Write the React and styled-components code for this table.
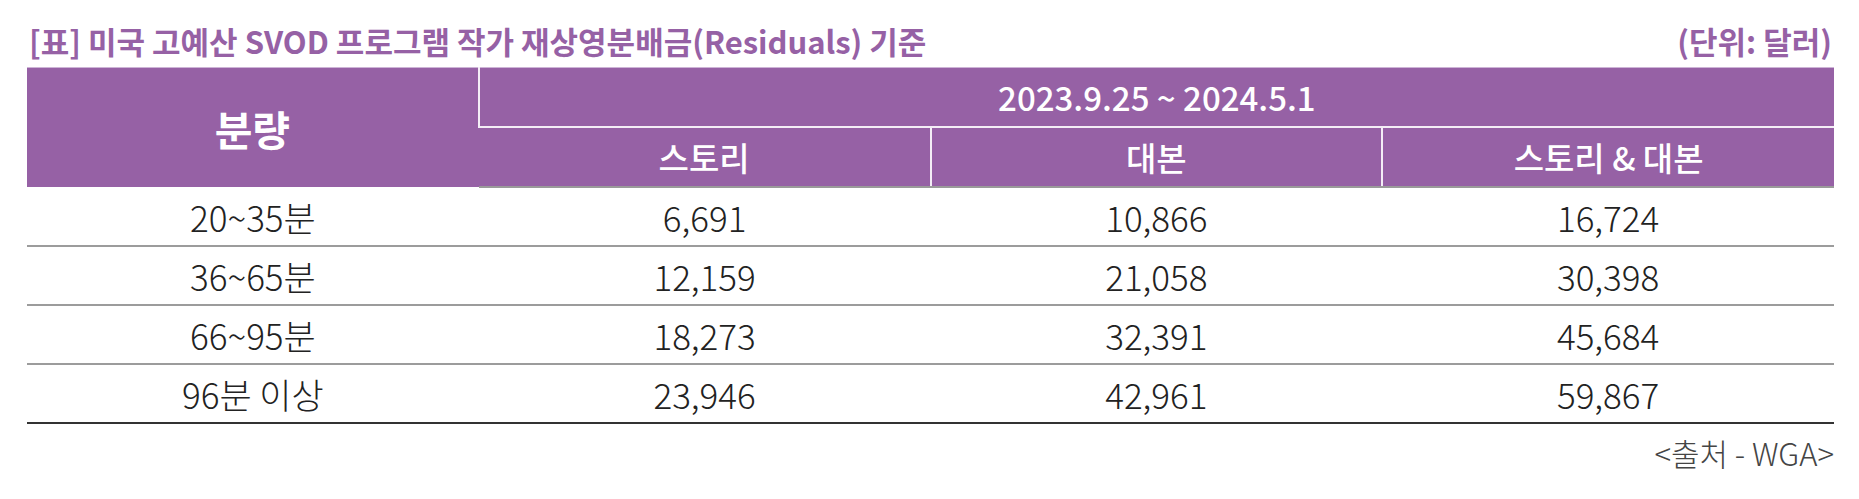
import React from "react";
import styled, { createGlobalStyle } from "styled-components";

const Global = createGlobalStyle`
  html, body { margin: 0; padding: 0; background: #ffffff; }
  body { font-family: "Noto Sans CJK KR", "Noto Sans", sans-serif; }
`;

const Page = styled.div`
  padding: 14px 25px 0 27px;
  width: 1859px;
  box-sizing: border-box;
`;

const TitleRow = styled.div`
  display: flex;
  justify-content: space-between;
  align-items: center;
  height: 53px;
  padding: 0 2px 0 2px;
  color: #9661a5;
  font-size: 31px;
  font-weight: 700;
`;

const Table = styled.table`
  width: 100%;
  border-collapse: collapse;
  table-layout: fixed;
  border-top: 1px solid #cdb4d6;
`;

const HeadCell = styled.th`
  background: #9661a5;
  color: #ffffff;
  height: 58px;
  padding: 0;
  font-weight: ${(p) => (p.$big ? 700 : 500)};
  font-size: ${(p) => (p.$big ? "41px" : "33px")};
  text-align: center;
  border-left: 2px solid #f4eef6;
  border-top: ${(p) => (p.$sub ? "2px solid #f4eef6" : "none")};
  &:first-child { border-left: none; }
`;

const HeadRow = styled.tr`
  &:last-child th { border-bottom: 2px solid #9a9a9a; }
`;

const Row = styled.tr`
  border-bottom: 2px solid #9c9c9c;
  &:last-child { border-bottom: 2px solid #333333; }
`;

const Cell = styled.td`
  height: 57px;
  padding: 0;
  text-align: center;
  font-size: 35px;
  font-weight: 300;
  color: #222222;
`;

const Source = styled.div`
  text-align: right;
  padding-top: 6px;
  font-size: 31px;
  font-weight: 300;
  color: #454545;
`;

const rows = [
  ["20~35분", "6,691", "10,866", "16,724"],
  ["36~65분", "12,159", "21,058", "30,398"],
  ["66~95분", "18,273", "32,391", "45,684"],
  ["96분 이상", "23,946", "42,961", "59,867"],
];

export default function App() {
  return (
    <>
      <Global />
      <Page>
        <TitleRow>
          <span>[표] 미국 고예산 SVOD 프로그램 작가 재상영분배금(Residuals) 기준</span>
          <span>(단위: 달러)</span>
        </TitleRow>
        <Table>
          <thead>
            <HeadRow>
              <HeadCell rowSpan={2} $big>분량</HeadCell>
              <HeadCell colSpan={3}>2023.9.25 ~ 2024.5.1</HeadCell>
            </HeadRow>
            <HeadRow>
              <HeadCell $sub>스토리</HeadCell>
              <HeadCell $sub>대본</HeadCell>
              <HeadCell $sub>스토리 &amp; 대본</HeadCell>
            </HeadRow>
          </thead>
          <tbody>
            {rows.map((r) => (
              <Row key={r[0]}>
                {r.map((c, i) => (
                  <Cell key={i}>{c}</Cell>
                ))}
              </Row>
            ))}
          </tbody>
        </Table>
        <Source>&lt;출처 - WGA&gt;</Source>
      </Page>
    </>
  );
}
